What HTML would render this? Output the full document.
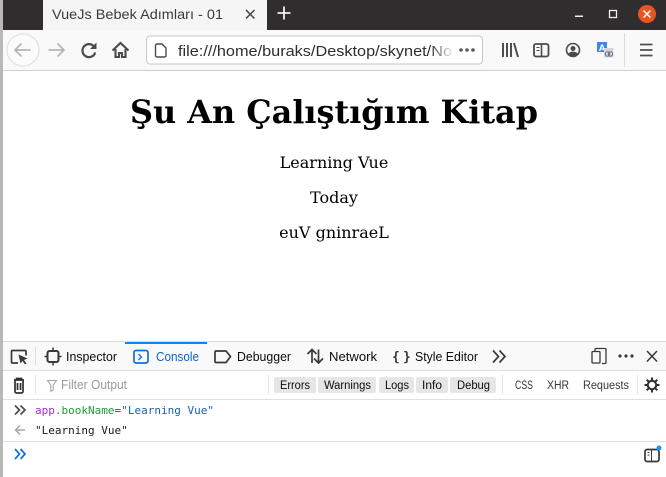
<!DOCTYPE html>
<html><head><meta charset="utf-8"><style>
html,body{margin:0;padding:0;width:666px;height:477px;overflow:hidden;background:#fff}
svg{display:block}
.ui{font-family:"Liberation Sans",sans-serif;font-size:12.5px;fill:#0c0c0d}
.m{font-family:"DejaVu Sans Mono","Liberation Mono",monospace;font-size:11px}
.s{font-family:"DejaVu Serif","Liberation Serif",serif}
.ic{fill:none;stroke:#4a4a4f;stroke-width:1.6}
</style></head><body>
<svg width="666" height="477" viewBox="0 0 666 477" xmlns="http://www.w3.org/2000/svg">
<defs><linearGradient id="f" x1="0" x2="1"><stop offset="0" stop-color="#fff" stop-opacity="0"/><stop offset="1" stop-color="#fff"/></linearGradient></defs>
<rect width="666" height="477" fill="#fff"/>
<!-- title bar -->
<rect width="666" height="30" fill="#2f2d2d"/>
<rect x="43" width="224" height="30" fill="#f5f5f5"/>
<text x="52" y="19" class="ui" style="font-size:14px;fill:#3e3a38" textLength="171" lengthAdjust="spacingAndGlyphs">VueJs Bebek Adımları - 01</text>
<path d="M246 10l8.500 8.500M254.500 10L246 18.500" stroke="#45413f" stroke-width="1.500" fill="none"/>
<path d="M284 6.500v13M277.500 13h13" stroke="#f0f0f0" stroke-width="1.800" fill="none"/>
<rect x="575" y="15.500" width="8" height="1.500" fill="#f0f0f0"/>
<rect x="609.500" y="10.500" width="7" height="7" fill="none" stroke="#f0f0f0" stroke-width="1.300"/>
<circle cx="647" cy="14" r="9" fill="#e95420"/>
<path d="M643.500 10.500l7 7M650.500 10.500l-7 7" stroke="#fff" stroke-width="1.500"/>
<!-- nav bar -->
<rect y="30" width="666" height="40" fill="#f9f9fa"/>
<rect y="70" width="666" height="1" fill="#cfcfcf"/>
<circle cx="23" cy="50" r="16" fill="#fbfbfb" stroke="#dcdcdc"/>
<path d="M15.500 50h15M21.500 43.500L15 50l6.500 6.500" fill="none" stroke="#b5b5b7" stroke-width="1.700"/>
<path d="M48.500 50h15M57.500 43.500L64 50l-6.500 6.500" fill="none" stroke="#b5b5b7" stroke-width="1.700"/>
<path d="M94 46.500a6.500 6.500 0 1 0 1.200 6" class="ic" style="stroke-width:2.200"/>
<path d="M96.500 42.500v6.500h-6.500z" fill="#4a4a4f"/>
<path d="M112.500 50.500l8-7.500 8 7.500M115.500 49v8h3.500v-4h3v4h3.500v-8" class="ic" style="stroke-width:2.100"/>
<!-- url -->
<rect x="146.500" y="36" width="336" height="28" rx="3.500" fill="#fff" stroke="#c8c8c8"/>
<path d="M155.500 45.500a1.500 1.500 0 0 1 1.500-1.500h5l4 4v7.500a1.500 1.500 0 0 1-1.500 1.500h-7.500a1.500 1.500 0 0 1-1.500-1.500z" class="ic" style="stroke-width:1.400"/>
<text x="178" y="56" class="ui" style="font-size:15px;fill:#2e2e30" textLength="274" lengthAdjust="spacingAndGlyphs">file:///home/buraks/Desktop/skynet/No</text>
<rect x="430" y="40" width="24" height="20" fill="url(#f)"/>
<g fill="#5b5b5f"><circle cx="461" cy="50" r="1.800"/><circle cx="467" cy="50" r="1.800"/><circle cx="473" cy="50" r="1.800"/></g>
<!-- right icons -->
<path d="M503 43v14M507 43v14M511 43v14M514 43l4 14" fill="none" stroke="#4f4f53" stroke-width="2"/>
<rect x="534" y="44" width="14.500" height="12.500" rx="2" class="ic" style="stroke-width:1.800"/>
<path d="M541.500 44v12.500" stroke="#4a4a4f" stroke-width="1.600"/>
<path d="M536.500 47.500h3M536.500 50.500h3" stroke="#4a4a4f"/>
<circle cx="573" cy="50" r="6.500" class="ic" style="stroke-width:1.600"/>
<circle cx="573" cy="48.500" r="2.500" fill="#4a4a4f"/>
<path d="M568 54a5.500 4 0 0 1 10 0a6.500 6.500 0 0 1-10 0z" fill="#4a4a4f"/>
<rect x="597" y="42" width="10" height="10" fill="#3f87ea"/>
<text x="602" y="51" text-anchor="middle" style="font:bold 9.500px 'Liberation Sans',sans-serif;fill:#fff">A</text>
<rect x="604" y="48" width="9.500" height="9.500" fill="#d6d6d8"/>
<circle cx="607.500" cy="54" r="2.200" fill="none" stroke="#5c6e85"/>
<circle cx="610.500" cy="54" r="2.200" fill="none" stroke="#5c6e85"/>
<rect x="624" y="33" width="1" height="34" fill="#dcdcdc"/>
<path d="M640 44.500h12.500M640 50h12.500M640 55.500h12.500" stroke="#4f4f53" stroke-width="1.800"/>
<!-- page -->
<text x="334" y="123" text-anchor="middle" class="s" style="font-size:32px;font-weight:bold;fill:#000" textLength="408" lengthAdjust="spacingAndGlyphs">Şu An Çalıştığım Kitap</text>
<text x="334" y="168" text-anchor="middle" class="s" style="font-size:16px;fill:#000">Learning Vue</text>
<text x="334" y="203" text-anchor="middle" class="s" style="font-size:16px;fill:#000">Today</text>
<text x="334" y="238" text-anchor="middle" class="s" style="font-size:16px;fill:#000">euV gninraeL</text>
<!-- left gutter -->
<rect y="0" width="3" height="477" fill="#b8b8b8"/>
<!-- devtools tabs -->
<rect x="3" y="341" width="663" height="1" fill="#d8d8d8"/>
<rect x="3" y="342" width="663" height="28" fill="#f9f9fa"/>
<rect x="3" y="370" width="663" height="1" fill="#dedede"/>
<rect x="125" y="342" width="82" height="2" fill="#0a84ff"/>
<path d="M18 363h-5.500a1 1 0 0 1-1-1v-10.500a1 1 0 0 1 1-1h12.500a1 1 0 0 1 1 1v4" fill="none" stroke="#38383d" stroke-width="1.700"/>
<path d="M18.500 354.500l9 4-3.500 1.500 2.500 3.500-1.500 1-2.500-3.500-2 2.500z" fill="#38383d"/>
<rect x="35" y="347" width="1" height="18" fill="#dedede"/>
<rect x="47.500" y="351" width="11" height="11" rx="2" fill="none" stroke="#38383d" stroke-width="2"/>
<path d="M53 347.500v3.500M53 362v3.500M44.500 356.500H47.500M58.500 356.500h3" stroke="#38383d" stroke-width="1.500"/>
<text x="66" y="361" class="ui" textLength="51" lengthAdjust="spacingAndGlyphs">Inspector</text>
<rect x="134" y="350.500" width="14" height="12.500" rx="2" fill="none" stroke="#0a6fe0" stroke-width="1.700"/>
<path d="M138.500 354l3 3-3 3" fill="none" stroke="#0a6fe0" stroke-width="1.300"/>
<text x="156" y="361" class="ui" style="fill:#0a62c8" textLength="43" lengthAdjust="spacingAndGlyphs">Console</text>
<path d="M216 351h10l4.500 5.500-4.500 6h-10a1 1 0 0 1-1-1v-9.500a1 1 0 0 1 1-1z" fill="none" stroke="#38383d" stroke-width="1.700"/>
<text x="237" y="361" class="ui" textLength="54" lengthAdjust="spacingAndGlyphs">Debugger</text>
<path d="M312 363v-13.500M307.500 354l4.500-4.500 4.500 4.500M318.500 349.500V363M314 358.500l4.500 4.500 4.500-4.500" fill="none" stroke="#38383d" stroke-width="1.700"/>
<text x="329" y="361" class="ui" textLength="48" lengthAdjust="spacingAndGlyphs">Network</text>
<text x="392 403" y="361" style="font:bold 13px 'DejaVu Sans Mono',monospace;fill:#38383d">{}</text>
<text x="415" y="361" class="ui" textLength="63" lengthAdjust="spacingAndGlyphs">Style Editor</text>
<path d="M493 350.500l5.500 6-5.500 6M499.500 350.500l5.500 6-5.500 6" fill="none" stroke="#38383d" stroke-width="1.700"/>
<path d="M595 351v-1.500a1 1 0 0 1 1-1h9a1 1 0 0 1 1 1v13a1 1 0 0 1-1 1h-3M593 351.500h6a1 1 0 0 1 1 1v9.500a1 1 0 0 1-1 1h-6a1 1 0 0 1-1-1v-9.500a1 1 0 0 1 1-1z" fill="none" stroke="#38383d" stroke-width="1.300"/>
<g fill="#38383d"><circle cx="620" cy="356" r="1.600"/><circle cx="626" cy="356" r="1.600"/><circle cx="632" cy="356" r="1.600"/></g>
<path d="M647 351l10 10.500M657 351l-10 10.500" stroke="#38383d" stroke-width="1.500"/>
<!-- filter bar -->
<rect x="3" y="371" width="663" height="28" fill="#fff"/>
<rect x="3" y="399" width="663" height="1" fill="#e0e0e0"/>
<path d="M14 380h10M15 380v11.500a1.500 1.500 0 0 0 1.500 1.500h5a1.500 1.500 0 0 0 1.500-1.500V380M16.500 380v-1.500h5v1.500M17.500 383v7M20.500 383v7" fill="none" stroke="#303034" stroke-width="1.700"/>
<rect x="35" y="375" width="1" height="19" fill="#e2e2e2"/>
<path d="M47.500 380.500h9l-3.300 4.500v5l-2.400 1.500V385z" fill="none" stroke="#a0a0a3"/>
<text x="61" y="389" class="ui" style="fill:#9a9a9c" textLength="66" lengthAdjust="spacingAndGlyphs">Filter Output</text>
<rect x="268" y="375" width="1" height="19" fill="#e2e2e2"/>
<g fill="#e6e6e7">
<rect x="274" y="377" width="42" height="16" rx="2"/>
<rect x="318" y="377" width="58" height="16" rx="2"/>
<rect x="379" y="377" width="35" height="16" rx="2"/>
<rect x="416" y="377" width="32" height="16" rx="2"/>
<rect x="450" y="377" width="46" height="16" rx="2"/>
</g>
<text x="280" y="389" class="ui" style="font-size:11.500px" textLength="30" lengthAdjust="spacingAndGlyphs">Errors</text>
<text x="324" y="389" class="ui" style="font-size:11.500px" textLength="47" lengthAdjust="spacingAndGlyphs">Warnings</text>
<text x="385" y="389" class="ui" style="font-size:11.500px" textLength="24" lengthAdjust="spacingAndGlyphs">Logs</text>
<text x="422" y="389" class="ui" style="font-size:11.500px" textLength="20" lengthAdjust="spacingAndGlyphs">Info</text>
<text x="457" y="389" class="ui" style="font-size:11.500px" textLength="33" lengthAdjust="spacingAndGlyphs">Debug</text>
<rect x="502" y="375" width="1" height="19" fill="#e2e2e2"/>
<text x="515" y="389" class="ui" style="font-size:11.500px;fill:#38383d" textLength="18" lengthAdjust="spacingAndGlyphs">CSS</text>
<text x="547" y="389" class="ui" style="font-size:11.500px;fill:#38383d" textLength="22" lengthAdjust="spacingAndGlyphs">XHR</text>
<text x="583" y="389" class="ui" style="font-size:11.500px;fill:#38383d" textLength="46" lengthAdjust="spacingAndGlyphs">Requests</text>
<rect x="637" y="375" width="1" height="19" fill="#e2e2e2"/>
<circle cx="652" cy="385" r="4.200" fill="none" stroke="#303034" stroke-width="2"/>
<path d="M652 377.500v3M652 389.500v3M644.500 385h3M656.500 385h3M646.700 379.700l2.100 2.100M655.200 388.200l2.100 2.100M657.300 379.700l-2.100 2.100M648.800 388.200l-2.100 2.100" stroke="#303034" stroke-width="2"/>
<!-- console -->
<path d="M15 405.500l4.500 4.500-4.500 4.500M20.500 405.500l4.500 4.500-4.500 4.500" fill="none" stroke="#4a4a4f" stroke-width="1.700"/>
<text x="35" y="414" class="m" textLength="179" lengthAdjust="spacing"><tspan fill="#a02bd6">app</tspan><tspan fill="#5a5a5f">.</tspan><tspan fill="#1f9a3a">bookName</tspan><tspan fill="#4a4a4f">=</tspan><tspan fill="#1c5fb0">"Learning Vue"</tspan></text>
<path d="M25 430h-9M20 425.500L15.500 430l4.500 4.500" fill="none" stroke="#a8a8aa" stroke-width="1.500"/>
<text x="35" y="434" class="m" fill="#1a1a1c">"Learning Vue"</text>
<rect x="3" y="441" width="663" height="1" fill="#e0e0e0"/>
<path d="M15 449l4.500 5-4.500 5M20.500 449l4.500 5-4.500 5" fill="none" stroke="#0a6fe0" stroke-width="1.700"/>
<rect x="645" y="449.500" width="14" height="12" rx="2" fill="none" stroke="#38383d" stroke-width="1.700"/>
<path d="M651.500 449.500v12M647.500 452.500h2M647.500 455h2" stroke="#38383d"/>
<circle cx="659" cy="448" r="2.500" fill="#0a9dff"/>
</svg>
</body></html>
